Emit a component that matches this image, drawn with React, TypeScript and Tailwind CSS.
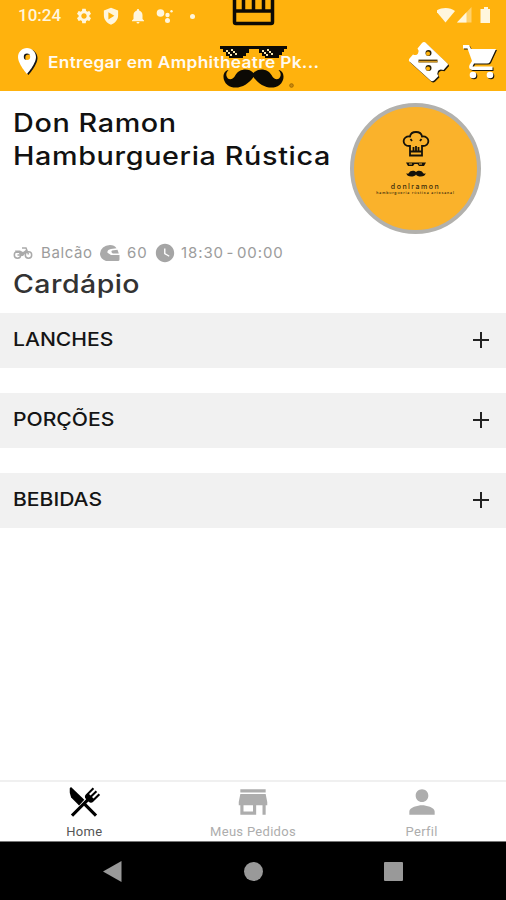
import type { ReactNode } from 'react';
import { MdSettings, MdNotifications, MdStore, MdPerson, MdWatchLater } from 'react-icons/md';

/** Menu categories, in the order the restaurant lists them. */
const CATEGORIES = ['LANCHES', 'PORÇÕES', 'BEBIDAS'];

/** Ticket outline, used for both the icon and its drop shadow. */
const TICKET = 'M14 2q2-2 4 0l21 20q2 1.500 0 3l-3.500 4q-4-1.500-5.500 1-1.500 2.500.5 5l-4.500 4.500q-2 1.500-3.500 0L2 21q-2-1.500-.5-3.500L5 13.500q3.500 1.500 5-1 1.500-2.500-.5-5Z';

function StatusBar() {
  return (
    <div className="flex h-8 items-center pl-[18px] pr-[15px] text-[#fff6dd]">
      <span className="w-[57px] font-['Roboto',sans-serif] text-[17px] font-medium">10:24</span>
      <MdSettings className="size-[18px]" />
      <svg viewBox="0 0 24 24" className="ml-[9px] size-[18px]" fill="currentColor">
        <path fillRule="evenodd" d="M12 1 2.500 4.500V11c0 6 4 10.500 9.500 12.500C17.500 21.500 21.500 17 21.500 11V4.500L12 1ZM8.500 7v9.500l8-4.700Z" />
      </svg>
      <MdNotifications className="ml-[9px] size-[18px]" />
      <svg viewBox="0 0 18 18" className="ml-[9px] size-[18px]" fill="currentColor">
        <circle cx="4.500" cy="6" r="3.800" />
        <circle cx="11.500" cy="8" r="2.200" />
        <circle cx="11.500" cy="13.500" r="2.500" />
        <circle cx="15.500" cy="4.300" r="1.200" />
      </svg>
      <span className="ml-4 size-[5px] rounded-full bg-[#fff6dd]" />
      <svg viewBox="0 0 56 18" className="-mr-0.5 ml-auto h-[18px] w-14" fill="currentColor">
        <path d="M-1 4C4.500 0 13 0 18 4L8.500 15.500Z" />
        <path d="M34.500 0v15.500H20Z" opacity=".45" />
        <path d="M29.500 5.300v10.200H20Z" />
        <path d="M44.500 2h2.500V0h4v2h2v14H43.500V2Z" />
      </svg>
    </div>
  );
}

/** Brand art behind the header: chef hat band, pixel glasses, moustache. */
function HeaderLogo() {
  return (
    <svg viewBox="0 0 80 91" className="absolute left-[218px] top-0 h-[91px] w-20">
      <path
        d="M16.500 0v22q0 1.500 1.500 1.500h35q1.500 0 1.500-1.500V0M17 11h37M25.500 0v11M35.500 0v11M45.500 0v11"
        fill="none"
        stroke="#0c0a05"
        strokeWidth="3.500"
      />
      <path d="M2 46h67v3h-3v3h-2v3h-3v3H47v-2h-3v-3h-3v-4H31v4h-3v3h-3v2H11v-2H8v-4H5v-3H2Z" fill="#0c0a05" />
      <path
        d="M8 50h2v2h2v2h2v2h-2v-2h-2v-2H8Zm5-1h2v2h2v2h2v2h-2v-2h-2v-2h-2Zm31 1h2v2h2v2h2v2h-2v-2h-2v-2h-2Zm5-1h2v2h2v2h2v2h-2v-2h-2v-2h-2Z"
        fill="#f5e6b0"
      />
      <path
        d="M35.500 73c-5-6-15-4-18 2-3 6-8 5-9 1-.5-2 0-4 2-6-6 1-7 10-1 15 8 6 20 1 26-8 6 9 18 14 26 8 6-5 5-14-1-15 2 2 2.500 4 2 6-1 4-6 5-9-1-3-6-13-8-18-2Z"
        fill="#0c0a05"
      />
      <circle cx="73.500" cy="85.500" r="1.800" fill="#c98a10" stroke="#a36b00" strokeWidth="1" />
    </svg>
  );
}

function Header() {
  return (
    <header className="relative h-[91px] shrink-0 overflow-hidden bg-[#ffb20d]">
      <HeaderLogo />
      <div className="relative">
        <StatusBar />
        <div className="flex h-[59px] items-center pl-[18px] pr-2">
          <svg viewBox="0 0 21 28" className="h-7 w-[21px]">
            <path fillRule="evenodd" transform="translate(1.5 1)" fill="#151515" d="M9 0C4 0 0 4 0 9c0 7 9 17 9 17s9-10 9-17c0-5-4-9-9-9Zm0 5.500a3.200 3.200 0 1 0 0 6.400 3.200 3.200 0 0 0 0-6.400Z" />
            <path fillRule="evenodd" fill="#fff" d="M9 0C4 0 0 4 0 9c0 7 9 17 9 17s9-10 9-17c0-5-4-9-9-9Zm0 5.500a3.200 3.200 0 1 0 0 6.400 3.200 3.200 0 0 0 0-6.400Z" />
          </svg>
          <span className="ml-[9px] w-0 whitespace-nowrap text-[16px] font-semibold text-[#fffaf0]">
            <span className="inline-block origin-left scale-x-[1.08] tracking-[0.3px]">Entregar em Amphitheatre Pk...</span>
          </span>
          <svg viewBox="0 0 42 42" className="ml-auto size-[42px]">
            <path d={TICKET} fill="#1b1608" transform="translate(1 1.2)" />
            <path d={TICKET} fill="#fff" />
            <circle cx="20.500" cy="12" r="3" fill="#2a2005" />
            <circle cx="20" cy="12.700" r="2.100" fill="#ffb20d" />
            <path d="M10.500 20h19" stroke="#40300b" strokeWidth="2.800" />
            <path d="M10.500 20.600h19" stroke="#d69b25" strokeWidth="1.500" />
            <circle cx="20.500" cy="27" r="3" fill="#2a2005" />
            <circle cx="20" cy="27.700" r="2.100" fill="#ffb20d" />
          </svg>
          <svg viewBox="0 0 36 36" className="ml-3 size-9">
            <g fill="#1b1608" transform="translate(1 1)">
              <path d="M1 1h6l2 4h25l-6 13q-1 1.500-3 1.500H12l-1.500 3h20V26H10q-4-1-2.500-5l2.500-4L5.500 4.500H1Z" />
              <circle cx="11" cy="31" r="3.300" />
              <circle cx="28" cy="31" r="3.300" />
            </g>
            <g fill="#fff">
              <path d="M1 1h6l2 4h25l-6 13q-1 1.500-3 1.500H12l-1.500 3h20V26H10q-4-1-2.500-5l2.500-4L5.500 4.500H1Z" />
              <circle cx="11" cy="31" r="3.300" />
              <circle cx="28" cy="31" r="3.300" />
            </g>
          </svg>
        </div>
      </div>
    </header>
  );
}

function RestaurantLogo() {
  return (
    <div className="flex size-[131px] flex-col items-center rounded-full border-4 border-[#b2b1ad] bg-[#fab22b] pt-6">
      <svg viewBox="0 0 28 26" className="h-[26px] w-7" fill="none" stroke="#15120a" strokeWidth="1.800">
        <path d="M8 24.500V15C-1 15.500 0 4.500 8 5.500 9-.5 19-.5 20 5.500c8-1 9 10 0 9.500v9.500ZM8 20.500h12M11.500 16v4M14 15v5M16.500 16v4M10 10 8.500 8M18 10l1.500-2" />
      </svg>
      <svg viewBox="0 0 24 15" className="mt-[5px] h-[15px] w-6" fill="#15120a">
        <path d="M2 .5h20L20 4h-5l-1.500-2h-3L9 4H4Z" />
        <path d="M5 1.500h3v1H5Zm10 0h3v1h-3Z" fill="#fab22b" />
        <path d="M12 10c-2-2-6-1.500-7 1-1 1-1.500 1-2.500 0-.5 4.500 8 4.500 9.500 1.500 1.500 3 10 3 9.500-1.500-1 1-1.500 1-2.500 0-1-2.500-5-3-7-1Z" />
      </svg>
      <span className="mt-[6px] text-[7px] font-medium leading-[8px] tracking-[1.500px] text-[#3b2c0c]">donlramon</span>
      <span className="whitespace-nowrap text-[3.500px] font-semibold leading-[5px] tracking-[0.85px] text-[#4a370e]">
        hamburgueria rústica artesanal
      </span>
    </div>
  );
}

function InfoRow() {
  return (
    <div className="mt-[10px] flex h-[18px] items-center text-[15px] leading-[18px] text-[#9c9c9c]">
      <svg viewBox="0 0 20 14" className="h-[14px] w-5" fill="none" stroke="#aaa" strokeWidth="1.500">
        <circle cx="4.500" cy="9" r="3.200" />
        <circle cx="15.500" cy="9" r="3.200" />
        <path d="M9 2h4l2.500 6.500M4.500 9h5l4-4.500" />
        <path d="M2 4.500h5l3 1.500 3-2 1 1-4 5H8L6 7H3Z" fill="#aaa" stroke="none" />
      </svg>
      <span className="ml-2 w-[59px] tracking-[0.6px]">Balcão</span>
      <svg viewBox="0 0 20 16" className="h-4 w-5" fill="#aaa">
        <path d="M10 0c3 0 5 1 6.500 3.200l-5.500.8C8.500 4.300 7 6 7.500 7.800L11 10h8.500v4.500q0 1.500-1.500 1.500H6Q0 14 0 8.500 1 .5 10 0Z" />
        <path d="m12 5.500 5.500-.7 1.300 3.700h-6q-2.300-1.500-.8-3Z" />
      </svg>
      <span className="ml-[7px] w-[27px] tracking-[1px]">60</span>
      <MdWatchLater className="size-[22px] text-[#a5a5a5]" />
      <span className="ml-[5px] whitespace-nowrap tracking-[0.9px] [word-spacing:-2.500px]">18:30 - 00:00</span>
    </div>
  );
}

function Category({ name }: { name: string }) {
  return (
    <button type="button" className="flex h-[55px] w-full items-center justify-between bg-[#f1f1f1] pb-[1px] pl-[13px] pr-[17px]">
      <span className="origin-left scale-x-[1.11] text-[19px] font-medium text-[#151515]">{name}</span>
      <svg viewBox="0 0 16 16" className="size-4" stroke="#222" strokeWidth="2">
        <path d="M8 0v16M0 8h16" />
      </svg>
    </button>
  );
}

function Tab({ label, active, children }: { label: string; active?: boolean; children: ReactNode }) {
  return (
    <div className={`flex flex-1 flex-col items-center pt-px ${active ? 'text-black' : 'text-[#adadad]'}`}>
      {children}
      <span className={`font-['Roboto',sans-serif] mt-[3px] text-[13px] leading-4 tracking-[0.3px] ${active ? 'text-[#555]' : ''}`}>
        {label}
      </span>
    </div>
  );
}

export default function App() {
  return (
    <div className="flex h-[900px] w-[506px] flex-col overflow-hidden bg-white font-['Inter',sans-serif]">
      <Header />
      <main className="flex-1">
        <div className="px-[13px] pt-3">
          <div className="flex h-[131px] justify-between pr-3">
            <h1 className="origin-left scale-x-[1.15] whitespace-nowrap pt-1 text-[25px] font-medium leading-[33px] tracking-[0.55px] text-[#111]">
              Don Ramon
              <br />
              Hamburgueria Rústica
            </h1>
            <RestaurantLogo />
          </div>
          <InfoRow />
          <h2 className="mt-[5px] origin-left scale-x-[1.14] text-[25px] font-medium leading-[34px] tracking-[0.4px] text-[#333]">
            Cardápio
          </h2>
        </div>
        <div className="mt-3 flex flex-col gap-[25.200px]">
          {CATEGORIES.map((name) => (
            <Category key={name} name={name} />
          ))}
        </div>
      </main>
      <nav className="flex h-[61px] shrink-0 border-t-2 border-[#f0f0f0]">
        <Tab label="Home" active>
          <svg viewBox="0 0 24 24" className="size-[38px]" fill="currentColor">
            <path d="M3 3.300 3.800 2.500 12.200 10.500 8.900 14.200 3.900 9.200Q2.600 6 3 3.300Z" />
            <path d="m13.410 13 6.880 6.880-1.410 1.410L12 14.410l-6.880 6.880-1.410-1.410 9.650-9.660-.2-.22c-.78-.77-.78-2.030 0-2.810l4.340-4.370.93.920L15.190 7l.96.940 3.240-3.250.92.920-3.250 3.240.94.960 3.260-3.250.92.940-4.370 4.340c-.78.780-2.040.780-2.810 0l-.22-.2L13.410 13Z" />
          </svg>
        </Tab>
        <Tab label="Meus Pedidos">
          <MdStore className="size-[38px]" />
        </Tab>
        <Tab label="Perfil">
          <MdPerson className="size-[38px]" />
        </Tab>
      </nav>
      <div className="flex h-[59px] shrink-0 items-center justify-between border-t border-[#777] bg-black pl-[102px] pr-[103px]">
        <svg viewBox="0 0 20 21" className="h-[21px] w-5" fill="#999">
          <path d="M19.500 0v21L1 10.500Z" />
        </svg>
        <span className="size-[19px] rounded-full bg-[#999]" />
        <span className="size-[19px] rounded-[1px] bg-[#999]" />
      </div>
    </div>
  );
}
